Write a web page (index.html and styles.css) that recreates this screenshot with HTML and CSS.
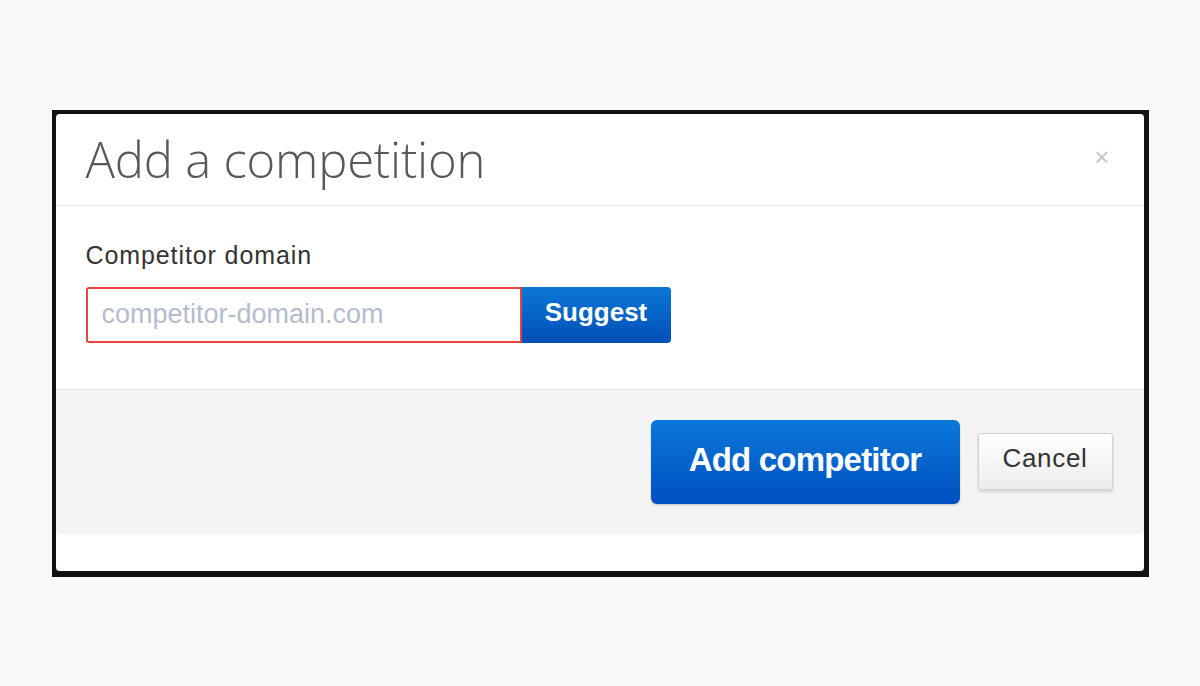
FILE: index.html
```html
<!DOCTYPE html>
<html lang="en">
<head>
    <meta charset="UTF-8">
    <meta name="viewport" content="width=device-width, initial-scale=1.0">
    <title>Add a competition</title>
    <link rel="stylesheet" href="styles.css">
</head>
<body>
    <div class="frame">
        <div class="modal">
            <div class="modal-header">
                <h2>Add a competition</h2>
                <span class="close">&times;</span>
            </div>
            <div class="modal-body">
                <label for="domain">Competitor domain</label>
                <div class="input-group">
                    <input id="domain" type="text" placeholder="competitor-domain.com">
                    <button class="btn-suggest">Suggest</button>
                </div>
            </div>
            <div class="modal-footer">
                <button class="btn-primary">Add competitor</button>
                <button class="btn-cancel">Cancel</button>
            </div>
        </div>
    </div>
</body>
</html>
```

FILE: styles.css
```css
body {
    margin: 0;
    height: 100vh;
    background: #f8f9fb;
    display: flex;
    justify-content: center;
    align-items: center;
    font-family: "Liberation Sans", Arial, sans-serif;
}

.frame {
    width: 1097px;
    height: 467px;
    box-sizing: border-box;
    border-style: solid;
    border-color: #111;
    border-width: 4px 5px 6px 4px;
    background: #2a2a2a;
}

.modal {
    height: 100%;
    background: #fff;
    border-radius: 4px;
    display: flex;
    flex-direction: column;
}

.modal-header {
    height: 92px;
    box-sizing: border-box;
    border-bottom: 1px solid #e5e5e5;
    display: flex;
    justify-content: space-between;
    align-items: center;
    padding: 0 34px 0 30px;
}

.modal-header h2 {
    margin: 0;
    font-family: "Open Sans", sans-serif;
    font-weight: 300;
    font-size: 49px;
    color: #585858;
    letter-spacing: -0.2px;
}

.close {
    font-size: 26px;
    color: #c8c8c8;
    margin-bottom: 4px;
}

.modal-body {
    height: 184px;
    box-sizing: border-box;
    border-bottom: 1px solid #e5e5e5;
    padding: 35px 30px 0;
}

.modal-body label {
    display: block;
    font-size: 25px;
    letter-spacing: 0.9px;
    color: #333;
    margin-bottom: 17px;
}

.input-group {
    display: flex;
}

.input-group input {
    width: 436px;
    height: 56px;
    box-sizing: border-box;
    border: 2px solid #e84343;
    border-radius: 3px 0 0 3px;
    padding: 0 14px;
    font-family: "Liberation Sans", Arial, sans-serif;
    font-size: 27px;
    color: #333;
    outline: none;
}

.input-group input::placeholder {
    color: #b3bdcc;
}

.btn-suggest {
    width: 149px;
    height: 56px;
    border: none;
    border-radius: 0 4px 4px 0;
    background: linear-gradient(#0a76d6, #0150b8);
    color: #fff;
    font-family: "Liberation Sans", Arial, sans-serif;
    font-weight: bold;
    font-size: 26px;
    padding-bottom: 6px;
}

.modal-footer {
    height: 144px;
    background: #f4f4f4;
    display: flex;
    justify-content: flex-end;
    align-items: center;
    gap: 18px;
    padding-right: 31px;
    border-radius: 0 0 4px 4px;
}

.btn-primary {
    width: 309px;
    height: 84px;
    border: none;
    border-radius: 6px;
    background: linear-gradient(#0a78d8, #004fc0);
    color: #fff;
    font-family: "Liberation Sans", Arial, sans-serif;
    font-weight: bold;
    font-size: 33px;
    letter-spacing: -0.8px;
    padding-bottom: 4px;
    box-shadow: 0 1px 2px rgba(0, 0, 0, 0.2);
}

.btn-cancel {
    width: 135px;
    height: 57px;
    border: 1px solid #d2d2d2;
    border-radius: 3px;
    background: linear-gradient(#ffffff, #ececec);
    color: #333;
    font-family: "Liberation Sans", Arial, sans-serif;
    font-size: 26px;
    letter-spacing: 0.7px;
    padding-bottom: 8px;
    box-shadow: 0 2px 3px rgba(0, 0, 0, 0.15);
}
```
